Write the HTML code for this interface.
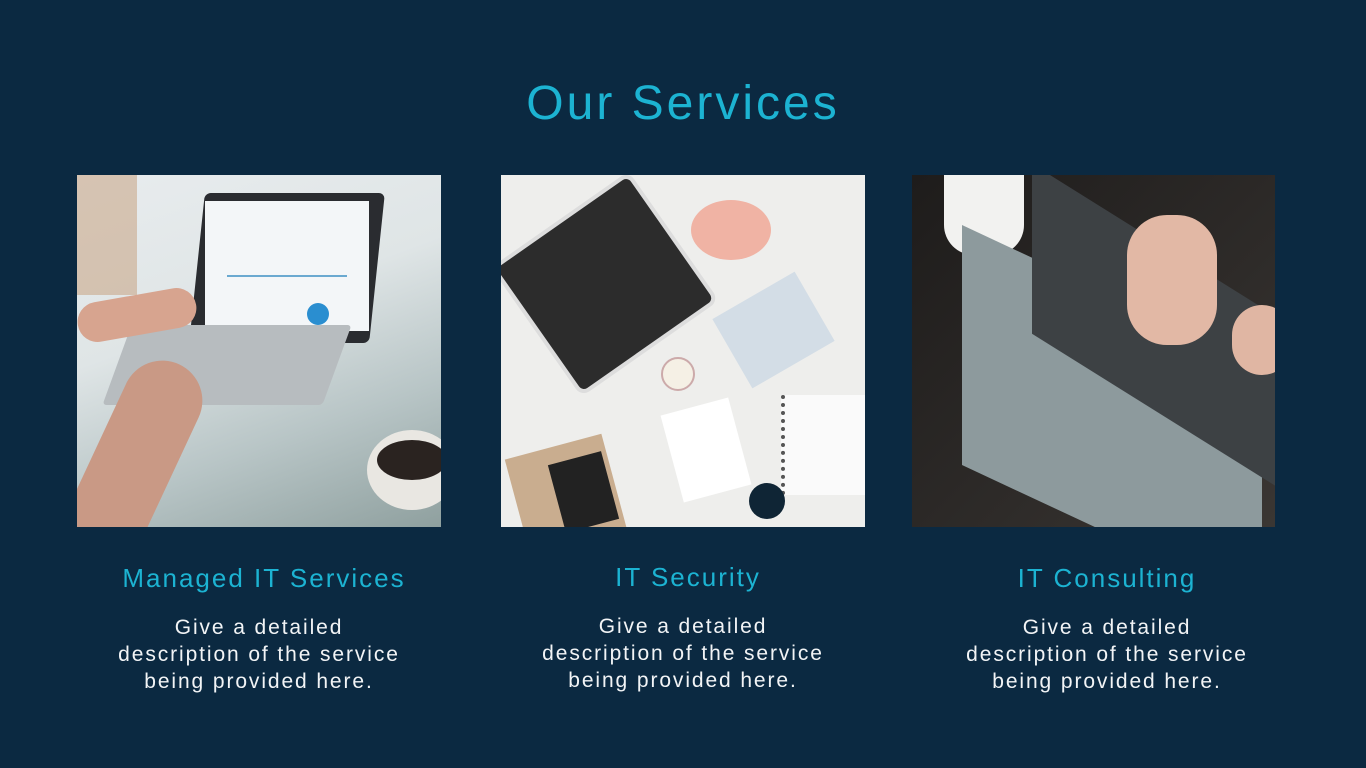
<!DOCTYPE html>
<html><head><meta charset="utf-8"><style>
body{margin:0;width:1366px;height:768px;background:#0b2941;font-family:"Liberation Sans",sans-serif;position:relative;overflow:hidden}
h1{position:absolute;top:76px;left:0;width:1366px;text-align:center;margin:0;font-weight:300;font-size:48px;color:#1cb3d2;letter-spacing:3px}
.img{position:absolute;top:175px;height:352px;overflow:hidden}
.t{position:absolute;width:400px;text-align:center;color:#1cb3d2;font-size:26px;top:563px;letter-spacing:2px}
.d{position:absolute;width:400px;text-align:center;color:#f2f4f6;font-size:21px;line-height:27px;top:614px;letter-spacing:1.9px}
</style></head><body>
<h1>Our Services</h1>
<div class="img" style="left:77px;width:364px;background:linear-gradient(160deg,#e8ecee 0%,#dfe5e6 40%,#b8c5c6 70%,#8fa09f 100%)">
 <div style="position:absolute;left:0;top:0;width:60px;height:120px;background:#c9a98a;opacity:.6"></div>
 <div style="position:absolute;left:120px;top:18px;width:180px;height:150px;background:#2a2c30;transform:skewX(-6deg);border-radius:6px"></div>
 <div style="position:absolute;left:128px;top:26px;width:164px;height:130px;background:#f3f6f8"></div>
 <div style="position:absolute;left:150px;top:80px;width:120px;height:20px;border-bottom:2px solid #6aa9d0"></div>
 <div style="position:absolute;left:230px;top:128px;width:22px;height:22px;border-radius:50%;background:#2a8ed0"></div>
 <div style="position:absolute;left:40px;top:150px;width:220px;height:80px;background:#b7bcbf;transform:skewX(-20deg);border-radius:4px"></div>
 <div style="position:absolute;left:0;top:120px;width:120px;height:40px;background:#d7a48f;border-radius:20px;transform:rotate(-10deg)"></div>
 <div style="position:absolute;left:20px;top:180px;width:80px;height:200px;background:#c99985;border-radius:40px;transform:rotate(25deg)"></div>
 <div style="position:absolute;left:290px;top:255px;width:90px;height:80px;background:#e9e7e2;border-radius:50%"></div>
 <div style="position:absolute;left:300px;top:265px;width:70px;height:40px;background:#2a2320;border-radius:50%"></div>
</div>
<div class="img" style="left:501px;width:364px;background:#eeeeec">
 <div style="position:absolute;left:20px;top:30px;width:160px;height:150px;background:#2c2c2c;transform:rotate(-35deg);border-radius:10px;border:4px solid #ddd"></div>
 <div style="position:absolute;left:190px;top:25px;width:80px;height:60px;background:#f0b3a4;border-radius:50%"></div>
 <div style="position:absolute;left:225px;top:115px;width:95px;height:80px;background:#d3dde6;transform:rotate(-30deg)"></div>
 <div style="position:absolute;left:160px;top:182px;width:30px;height:30px;border-radius:50%;background:#f5f0e5;border:2px solid #caa"></div>
 <div style="position:absolute;left:170px;top:230px;width:70px;height:90px;background:#fff;transform:rotate(-15deg)"></div>
 <div style="position:absolute;left:280px;top:220px;width:80px;height:100px;background:#fafafa;border-left:4px dotted #555"></div>
 <div style="position:absolute;left:15px;top:270px;width:100px;height:100px;background:#c9ad8f;transform:rotate(-15deg)"></div>
 <div style="position:absolute;left:55px;top:282px;width:55px;height:70px;background:#222;transform:rotate(-15deg)"></div>
 <div style="position:absolute;left:248px;top:308px;width:36px;height:36px;border-radius:50%;background:#0f2535"></div>
</div>
<div class="img" style="left:912px;width:363px;background:linear-gradient(135deg,#1e1c1b,#2e2b29 60%,#3a3633)">
 <div style="position:absolute;left:32px;top:0;width:80px;height:80px;border-radius:0 0 30px 30px;background:#f2f2f0"></div>
 <div style="position:absolute;left:50px;top:120px;width:300px;height:240px;background:#8d9a9d;transform:skewY(25deg)"></div>
 <div style="position:absolute;left:120px;top:70px;width:260px;height:170px;background:#3d4144;transform:skewY(32deg)"></div>
 <div style="position:absolute;left:215px;top:40px;width:90px;height:130px;background:#e2b8a5;border-radius:40px"></div>
 <div style="position:absolute;left:320px;top:130px;width:60px;height:70px;background:#e0b6a3;border-radius:30px"></div>
</div>
<div class="t" style="left:64px">Managed IT Services</div>
<div class="t" style="left:488px;top:562px">IT Security</div>
<div class="t" style="left:907px">IT Consulting</div>
<div class="d" style="left:59px">Give a detailed<br>description of the service<br>being provided here.</div>
<div class="d" style="left:483px;top:613px">Give a detailed<br>description of the service<br>being provided here.</div>
<div class="d" style="left:907px">Give a detailed<br>description of the service<br>being provided here.</div>
</body></html>
